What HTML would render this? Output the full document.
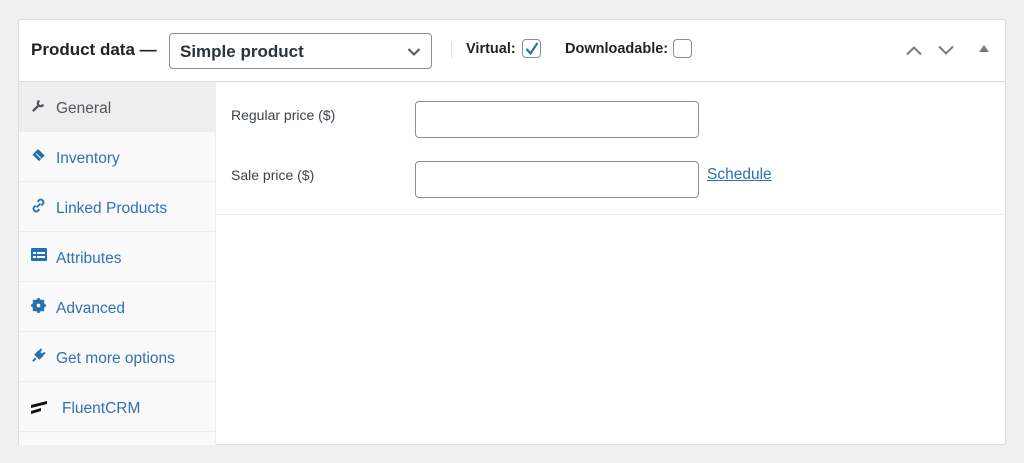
<!DOCTYPE html>
<html><head><style>
*{box-sizing:border-box;margin:0;padding:0}
body{width:1024px;height:463px;background:#f0f0f1;font-family:"Liberation Sans",sans-serif;position:relative;overflow:hidden}
.panel{position:absolute;left:18px;top:19px;width:988px;height:426px;background:#fff;border:1px solid #dcdcde}
.hdr{position:absolute;left:0;top:0;width:100%;height:62px;border-bottom:1px solid #dcdcde}
.abs{position:absolute}
.side{position:absolute;left:0;top:62px;width:197px;height:363px;background:#fafafa;border-right:1px solid #eee}
.row{position:absolute;left:0;width:197px;height:50px;border-bottom:1px solid #eee;color:#2f6fb5;font-size:15.5px}
.row span{position:absolute;left:37px;top:16px}
.row svg{position:absolute;left:12px;top:16px}
.inp{position:absolute;width:284px;height:37px;border:1px solid #8c8f94;border-radius:4px;background:#fff}
.lbl{position:absolute;font-size:14px;color:#3c434a}
</style></head><body>
<div class="panel">
 <div class="hdr">
  <div class="abs" style="left:12px;top:20px;font-size:17px;font-weight:bold;color:#1d2327">Product data —</div>
  <div class="abs" style="left:150px;top:13px;width:263px;height:36px;border:1px solid #8c8f94;border-radius:4px">
   <span class="abs" style="left:10px;top:8px;font-size:17px;font-weight:bold;color:#2c3338">Simple product</span>
   <svg class="abs" style="left:237px;top:13px" width="14" height="10" viewBox="0 0 14 10"><path d="M1.5 2l5.5 5.5L12.5 2" fill="none" stroke="#50575e" stroke-width="2"/></svg>
  </div>
  <div class="abs" style="left:432px;top:21px;width:1px;height:17px;background:#dcdcde"></div>
  <div class="abs" style="left:447px;top:21px;font-size:14.5px;font-weight:bold;color:#1d2327">Virtual:</div>
  <div class="abs" style="left:503px;top:19px;width:19px;height:19px;border:1px solid #8c8f94;border-radius:4px">
   <svg class="abs" style="left:2px;top:1px" width="14" height="15" viewBox="0 0 14 15"><path d="M1.5 8l4 4.5L12.5 2" fill="none" stroke="#2271b1" stroke-width="2.2"/></svg>
  </div>
  <div class="abs" style="left:546px;top:21px;font-size:14.5px;font-weight:bold;color:#1d2327">Downloadable:</div>
  <div class="abs" style="left:654px;top:19px;width:19px;height:19px;border:1px solid #8c8f94;border-radius:4px"></div>
  <svg class="abs" style="left:886px;top:25px" width="18" height="11" viewBox="0 0 18 11"><path d="M2 9.5l7-7 7 7" fill="none" stroke="#787c82" stroke-width="2"/></svg>
  <svg class="abs" style="left:918px;top:25px" width="18" height="11" viewBox="0 0 18 11"><path d="M2 1.5l7 7 7-7" fill="none" stroke="#787c82" stroke-width="2"/></svg>
  <svg class="abs" style="left:960px;top:25px" width="10" height="8" viewBox="0 0 10 8"><path d="M0 7L5 0l5 7z" fill="#787c82"/></svg>
 </div>
 <div class="side">
  <div class="row" style="top:0;background:#eee;color:#50575e"><svg width="15" height="15" viewBox="0 0 16 16"><path d="M2 14l6-6M9 3a3 3 0 1 0 4 4" fill="none" stroke="#50575e" stroke-width="2.5"/></svg><span style="top:18px">General</span></div>
  <div class="row" style="top:50px"><svg width="16" height="15" viewBox="0 0 16 16"><path d="M7 1l7 7-6 6-7-7z" fill="#2271b1"/><path d="M5 6l5 5" stroke="#fff" stroke-width="1"/></svg><span style="top:18px">Inventory</span></div>
  <div class="row" style="top:100px"><svg width="15" height="15" viewBox="0 0 16 16"><path d="M6 10l4-4M7 4l2-2a3 3 0 0 1 4 4l-2 2M9 12l-2 2a3 3 0 0 1-4-4l2-2" fill="none" stroke="#2271b1" stroke-width="2"/></svg><span style="top:18px">Linked Products</span></div>
  <div class="row" style="top:150px"><svg width="16" height="13" viewBox="0 0 16 13"><rect x="0" y="0" width="16" height="13" rx="1" fill="#2271b1"/><rect x="2" y="4" width="3" height="2" fill="#fff"/><rect x="6" y="4" width="8" height="2" fill="#fff"/><rect x="2" y="8" width="3" height="2" fill="#fff"/><rect x="6" y="8" width="8" height="2" fill="#fff"/></svg><span style="top:18px">Attributes</span></div>
  <div class="row" style="top:200px"><svg width="15" height="15" viewBox="0 0 16 16"><circle cx="8" cy="8" r="5" fill="none" stroke="#2271b1" stroke-width="3.5"/><path d="M8 0v16M0 8h16M2.3 2.3l11.4 11.4M13.7 2.3L2.3 13.7" stroke="#2271b1" stroke-width="2.5"/><circle cx="8" cy="8" r="2" fill="#fafafa"/></svg><span style="top:18px">Advanced</span></div>
  <div class="row" style="top:250px"><svg width="15" height="15" viewBox="0 0 16 16"><path d="M2 14l3-3M5 7l4 4 3-3-4-4zM9 4l2-3M12 7l3-2" fill="#2271b1" stroke="#2271b1" stroke-width="2.2"/></svg><span style="top:18px">Get more options</span></div>
  <div class="row" style="top:300px"><svg width="18" height="14" viewBox="0 0 18 14" style="left:11px;top:18px"><path d="M1 5L17 1v3L1 8zM1 11l10-3v3L1 14z" fill="#111"/></svg><span style="left:43px;top:18px">FluentCRM</span></div>
 </div>
 <div class="abs" style="left:197px;top:62px;width:790px;height:133px;border-bottom:1px solid #eee"></div>
 <div class="lbl" style="left:212px;top:87px">Regular price ($)</div>
 <div class="inp" style="left:396px;top:81px"></div>
 <div class="lbl" style="left:212px;top:147px">Sale price ($)</div>
 <div class="inp" style="left:396px;top:141px"></div>
 <div class="abs" style="left:688px;top:146px;font-size:15.5px;color:#2f6fb5;text-decoration:underline">Schedule</div>
</div>
</body></html>
